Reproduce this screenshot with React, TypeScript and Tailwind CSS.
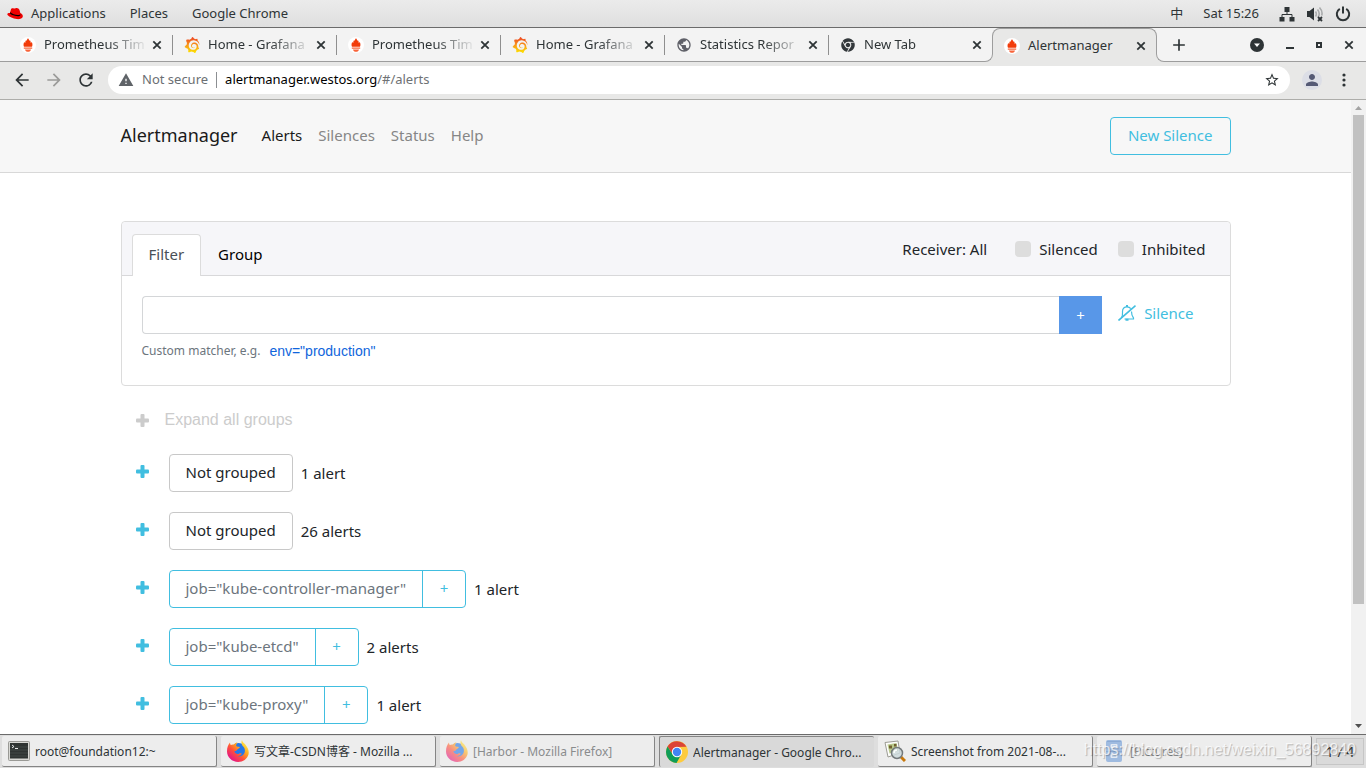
import React, { useState } from 'react';
import { MdArrowBack, MdArrowForward, MdRefresh, MdStarBorder, MdWarning, MdPerson, MdPublic, MdAdd } from 'react-icons/md';
import { FaChrome } from 'react-icons/fa';
import { SiGrafana } from 'react-icons/si';

type TabIcon = 'prometheus' | 'grafana' | 'globe' | 'chrome';

interface AlertGroup {
  label: string | null;
  count: string;
}

const tabs: { title: string; icon: TabIcon }[] = [
  { title: 'Prometheus Tim', icon: 'prometheus' },
  { title: 'Home - Grafana', icon: 'grafana' },
  { title: 'Prometheus Tim', icon: 'prometheus' },
  { title: 'Home - Grafana', icon: 'grafana' },
  { title: 'Statistics Repor', icon: 'globe' },
  { title: 'New Tab', icon: 'chrome' }
];

const groups: AlertGroup[] = [
  { label: null, count: '1 alert' },
  { label: null, count: '26 alerts' },
  { label: 'job="kube-controller-manager"', count: '1 alert' },
  { label: 'job="kube-etcd"', count: '2 alerts' },
  { label: 'job="kube-proxy"', count: '1 alert' }
];

function PrometheusIcon() {
  return (
    <svg className="size-4 shrink-0" viewBox="0 0 16 16">
      <circle cx="8" cy="8" r="8" fill="#fff" />
      <path
        fill="#f23c0a"
        d="M8 1c.3 1 1.200 1.700 1.300 2.900.4-.2.500-.6.500-1 .8 1 1 1.900.9 3 .5-.1.900-.5 1.100-.9.8 1.500.9 3.300.2 4.800H4c-.7-1.500-.6-3.300.2-4.800.2.4.6.8 1.100.9-.1-1.100.1-2 .9-3 0 .4.1.8.5 1C6.800 2.700 7.700 2 8 1z"
      />
      <path fill="#f8643a" d="M3.800 10.400h8.400v1.400H3.800zM5 12.400h6c-.3 1.400-1.500 2.400-3 2.400s-2.700-1-3-2.400z" />
    </svg>
  );
}

function GrafanaIcon() {
  return (
    <>
      <svg className="absolute size-0">
        <defs>
          <linearGradient id="grafana-fill" x1="0" y1="0" x2="0" y2="1">
            <stop offset="0.05" stopColor="#ee4a23" />
            <stop offset="0.45" stopColor="#f78f1e" />
            <stop offset="1" stopColor="#fde500" />
          </linearGradient>
        </defs>
      </svg>
      <SiGrafana className="size-4 shrink-0" fill="url(#grafana-fill)" />
    </>
  );
}

function FavIcon({ icon }: { icon: TabIcon }) {
  if (icon === 'prometheus') return <PrometheusIcon />;
  if (icon === 'grafana') return <GrafanaIcon />;
  if (icon === 'globe') return <MdPublic className="size-4 shrink-0 text-[#5f6068]" />;
  return <FaChrome className="size-4 shrink-0 p-px text-[#33383b]" />;
}

function CloseIcon() {
  return (
    <svg className="size-2.5" viewBox="0 0 10 10" stroke="#2e3436" strokeWidth="1.800">
      <path d="M1.300 1.300l7.400 7.400M8.700 1.300L1.300 8.700" />
    </svg>
  );
}

function RedHatIcon() {
  return (
    <svg className="h-3 w-4" viewBox="0 0 16 12">
      <path fill="#e00" d="M4 1.200C4.300.2 5.500 0 6.300.3c.8.300 1.500.2 2.300-.1C10.200-.3 12 .5 12.500 2l.8 3c1.400.7 2.700 1.800 2.500 3.400-.3 2.200-3.300 3-6 2.700C6 10.700 2.300 8.900.8 7.300c-1.200-1.500 0-2.500 2.100-2.400z" />
      <path d="M3.200 4.300c1.700 1.700 5.300 3 8 2.800 1.100-.1 2-.5 2-1.200l.2 1.300c-.7 1.100-2.600 1.200-4.300.9C6.500 7.700 3.700 6.500 2.900 5.300z" />
    </svg>
  );
}

function NetworkIcon() {
  return (
    <svg className="size-4" viewBox="0 0 16 16" fill="#2e3436">
      <path d="M5.500 1h5v5h-5zM.5 11h5v4.500h-5zM10.500 11h5v4.500h-5z" />
      <path fill="none" stroke="#2e3436" d="M8 6v2.500M3 11V8.500h10V11" />
    </svg>
  );
}

function VolumeIcon() {
  return (
    <svg className="size-4" viewBox="0 0 16 16" fill="none">
      <path fill="#2e3436" d="M0 5h2.500L7 1.500v13L2.500 11H0z" />
      <path stroke="#a9abac" strokeWidth="1.600" d="M8.500 5.500c1 1.500 1 3.500 0 5M10.500 3.500c2 2.500 2 5.500.5 7.500M12.500 1.500c2.300 2.500 3 5.500 2.200 8" />
      <path stroke="#2e3436" strokeWidth="1.800" d="M11 11l4 4M15 11l-4 4" />
    </svg>
  );
}

function PowerIcon() {
  return (
    <svg className="size-4" viewBox="0 0 16 16" fill="none" stroke="#2e3436" strokeWidth="2">
      <path d="M4.800 2.800a6.200 6.200 0 1 0 6.400 0M8 .500v7" />
    </svg>
  );
}

// Thick "+" used to expand a group
function PlusIcon() {
  return (
    <svg className="size-[13px]" viewBox="0 0 13 13" fill="currentColor">
      <rect x="4.500" y="0" width="4" height="13" rx="1" />
      <rect x="0" y="4.500" width="13" height="4" rx="1" />
    </svg>
  );
}

function BellSlashIcon() {
  return (
    <svg className="h-4 w-[18px]" viewBox="0 0 18 16" fill="none" stroke="currentColor" strokeWidth="1.200">
      <path d="M3.500 12.500C4.800 11 4.500 9 4.500 6.500 4.500 3.500 6.300 1.800 9 1.800c1.700 0 3 .7 3.800 1.800M13.500 6.500c0 3 .3 4.600 2 6.500v1H6.500" />
      <path strokeWidth="2" d="M9 0v2M7.500 14.800h3" />
      <path strokeWidth="1.600" d="M.5 15.500L17.500.700" />
    </svg>
  );
}

function TerminalIcon() {
  return (
    <svg className="size-[22px]" viewBox="0 0 22 22">
      <rect x=".5" y="1.500" width="21" height="19" rx="1" fill="#d8d8d4" stroke="#9a9a96" />
      <rect x="2" y="3" width="18" height="15.500" fill="#2f3432" />
      <path d="M2 7h18M2 10h18M2 13h18M2 16h18" stroke="#434946" />
      <path d="M4 5l2 1.500L4 8M7 8.500h3" stroke="#e8e8e8" fill="none" />
    </svg>
  );
}

function FirefoxIcon() {
  return (
    <svg className="size-[22px]" viewBox="0 0 22 22">
      <defs>
        <linearGradient id="fox" x1="0.9" y1="0.1" x2="0.2" y2="0.9">
          <stop offset="0" stopColor="#fff44f" />
          <stop offset="0.35" stopColor="#ffa91e" />
          <stop offset="0.65" stopColor="#ff4f3a" />
          <stop offset="1" stopColor="#e31587" />
        </linearGradient>
      </defs>
      <circle cx="11.500" cy="10.500" r="7.500" fill="#2477e8" />
      <path
        fill="url(#fox)"
        d="M15 0c.2 2 2 3 3.500 4.800C21 8 22.300 11 21.500 14.500 20.300 19 16 22 11.200 22 5 22 0 17.300 0 11.300 0 7.500 1.200 4.500 3 2.500c0 1 .3 1.900.8 2.500C5 4.300 6 4.300 7 4.600 8.200 3 9.500 2.500 10.500 2.300 9.500 3.500 9 4.600 9.300 6c.7 1 2.500.6 3.500 1-.2 1.500-2 1.800-2.800 2.800-.3 1.200-1.500 1.500-2.700 1.400C8 13.500 10 14.500 12 13.700c1.200-.5 2-.5 2.700.1-1 2-3 2.400-4.500 2.300 3.500 1.300 7.500-1 7.700-5 .1-2-.7-3.800-2.200-5C14.500 4.500 14 2 15 0z"
      />
    </svg>
  );
}

function ChromeIcon() {
  return (
    <svg className="size-[22px]" viewBox="0 0 22 22">
      <circle cx="11" cy="11" r="11" fill="#fdcb3f" />
      <path fill="#db4437" d="M1.500 5.500A11 11 0 0 1 20.500 5.800L11 6 6.700 13.500z" />
      <path fill="#0f9d58" d="M1.500 5.500L6.700 13.500 11 16l4.300-2.500L10.500 22A11 11 0 0 1 1.500 5.500z" />
      <circle cx="11" cy="11" r="5.200" fill="#fff" />
      <circle cx="11" cy="11" r="4.200" fill="#4285f4" />
    </svg>
  );
}

function ViewerIcon() {
  return (
    <svg className="size-[22px]" viewBox="0 0 22 22">
      <path d="M1 2.500L14 1l2 12-12 4z" fill="#fdfdfb" stroke="#9c9c94" />
      <path d="M3.500 4.500l9-1.500 1.500 8-8.500 2.500z" fill="#b9c98c" />
      <path d="M5 5.500h3v3H5zM10 4h2.500v2.500H10z" fill="#716030" />
      <path d="M17 17l4 4" stroke="#c8780c" strokeWidth="3" />
      <circle cx="13" cy="13" r="5.500" fill="#cdd9dc" fillOpacity=".85" stroke="#74797b" strokeWidth="1.500" />
      <path d="M10 13c0-2 1.500-3 3-3" stroke="#fff" strokeWidth="1.500" fill="none" />
    </svg>
  );
}

function DrawerIcon() {
  return (
    <svg className="size-[22px]" viewBox="0 0 22 22">
      <rect x="3" y="0" width="16" height="22" rx="2" fill="#6c9ad8" />
      <path d="M4 1.500h14M3 11.500h16" stroke="#4b7fc5" />
      <rect x="7.500" y="4" width="7" height="4" rx="1" fill="#dfe9f6" />
      <rect x="7.500" y="14" width="7" height="4" rx="1" fill="#dfe9f6" />
      <path d="M9 6h4M9 16h4" stroke="#6c9ad8" />
    </svg>
  );
}

const tasks = [
  { title: 'root@foundation12:~', icon: <TerminalIcon />, state: 'open' },
  { title: '写文章-CSDN博客 - Mozilla ...', icon: <FirefoxIcon />, state: 'open' },
  { title: '[Harbor - Mozilla Firefox]', icon: <FirefoxIcon />, state: 'minimized' },
  { title: 'Alertmanager - Google Chro...', icon: <ChromeIcon />, state: 'active' },
  { title: 'Screenshot from 2021-08-...', icon: <ViewerIcon />, state: 'open' },
  { title: '[Pictures]', icon: <DrawerIcon />, state: 'minimized' }
];

function TopPanel() {
  return (
    <header className="flex h-7 shrink-0 items-center border-b border-[#6b6b6b] bg-linear-to-b from-[#ebebeb] to-[#dfdfdf] pr-[15px] pl-[7px] text-[13px] text-[#2e3436]">
      <button className="flex items-center gap-2">
        <RedHatIcon />
        Applications
      </button>
      <button className="ml-6">Places</button>
      <button className="ml-6">Google Chrome</button>
      <div className="ml-auto flex items-center">
        <span>中</span>
        <span className="ml-5">Sat 15:26</span>
        <div className="ml-5 flex gap-3">
          <NetworkIcon />
          <VolumeIcon />
          <PowerIcon />
        </div>
      </div>
    </header>
  );
}

function TabStrip() {
  return (
    <div className="flex h-[34px] shrink-0 border-b border-[#9d9d9d] bg-[#f3f3f3] pl-2 text-[13px] text-[#2e3436]">
      {tabs.map((tab, i) => (
        <div key={i} className="flex w-[164px] items-center">
          <div className={`h-5 w-px ${i > 0 ? 'bg-[#8f8f8f]' : ''}`} />
          <div className="flex min-w-0 flex-1 items-center pr-2.5 pl-[11px]">
            <FavIcon icon={tab.icon} />
            <span className="ml-2 flex-1 overflow-hidden whitespace-nowrap [mask-image:linear-gradient(to_right,black_60%,transparent)]">
              {tab.title}
            </span>
            <button aria-label="Close tab" className="ml-1">
              <CloseIcon />
            </button>
          </div>
        </div>
      ))}
      <div className="relative -mb-px flex w-[165px] items-center rounded-t-lg border-x border-t border-[#9d9d9d] bg-[#e8e8e7] pr-2.5 pl-[11px]">
        <span className="absolute bottom-0 -left-2 size-2 bg-[#e8e8e7]">
          <span className="block size-full rounded-br-lg border-r border-b border-[#9d9d9d] bg-[#f3f3f3]" />
        </span>
        <span className="absolute -right-2 bottom-0 size-2 bg-[#e8e8e7]">
          <span className="block size-full rounded-bl-lg border-b border-l border-[#9d9d9d] bg-[#f3f3f3]" />
        </span>
        <PrometheusIcon />
        <span className="ml-2 flex-1">Alertmanager</span>
        <button aria-label="Close tab">
          <CloseIcon />
        </button>
      </div>
      <button aria-label="New tab" className="ml-3">
        <MdAdd className="size-5 text-[#2e3436]" />
      </button>
      <div className="ml-auto flex items-center gap-[22px] pr-3">
        <button aria-label="Search tabs">
          <svg className="size-3.5" viewBox="0 0 14 14">
            <circle cx="7" cy="7" r="7" fill="#2e3436" />
            <path d="M4 5.500h6L7 9z" fill="#fff" />
          </svg>
        </button>
        <button aria-label="Minimize">
          <svg className="size-2" viewBox="0 0 8 8"><path fill="#2e3436" d="M0 6h8v2H0z" /></svg>
        </button>
        <button aria-label="Maximize">
          <svg className="size-1.5" viewBox="0 0 6 6"><path fill="none" stroke="#2e3436" strokeWidth="2" d="M1 1h4v4H1z" /></svg>
        </button>
        <button aria-label="Close">
          <CloseIcon />
        </button>
      </div>
    </div>
  );
}

function Toolbar() {
  return (
    <div className="flex h-[38px] shrink-0 items-center border-b border-[#adadaa] bg-[#e8e8e7] pr-5 pb-px pl-3">
      <div className="flex items-center gap-3 text-[#2e3436]">
        <button aria-label="Back"><MdArrowBack className="size-5" /></button>
        <button aria-label="Forward"><MdArrowForward className="size-5 text-[#9b9b99]" /></button>
        <button aria-label="Reload"><MdRefresh className="size-5" /></button>
      </div>
      <div className="ml-3 flex h-7 flex-1 items-center rounded-full bg-white px-2.5 text-[13px]">
        <MdWarning className="size-4 text-[#5f6368]" />
        <span className="ml-2 text-[#6b6f73]">Not secure</span>
        <span className="mx-2 h-4 w-px bg-[#8c8f92]" />
        <span className="flex-1 text-[#6f7275]">
          <span className="text-black">alertmanager.westos.org</span>/#/alerts
        </span>
        <button aria-label="Bookmark"><MdStarBorder className="size-4 text-[#2e3436]" /></button>
      </div>
      <button aria-label="Profile" className="ml-3 flex size-5 items-center justify-center rounded-full bg-[#dcdee6]">
        <MdPerson className="size-[18px] text-[#555a75]" />
      </button>
      <button aria-label="Menu" className="ml-5">
        <svg className="h-3.5 w-1" viewBox="0 0 4 14" fill="#2e3436">
          <circle cx="2" cy="2" r="1.600" />
          <circle cx="2" cy="7" r="1.600" />
          <circle cx="2" cy="12" r="1.600" />
        </svg>
      </button>
    </div>
  );
}

function FilterCard() {
  const [activeTab, setActiveTab] = useState('filter');
  const [matcher, setMatcher] = useState('');

  return (
    <section className="mt-12 rounded border border-[#dcdcdc]">
      <div className="flex h-[54px] items-end rounded-t border-b border-[#d8d8da] bg-[#f6f6f9] pr-6 pl-2.5">
        {['filter', 'group'].map((key) => (
          <button
            key={key}
            onClick={() => setActiveTab(key)}
            className={`-mb-px h-[42px] rounded-t border border-b-0 px-4 pb-1 ${
              activeTab === key ? 'border-[#dcdcdc] bg-white text-[#495057]' : 'border-transparent text-black'
            }`}
          >
            {key === 'filter' ? 'Filter' : 'Group'}
          </button>
        ))}
        <div className="ml-auto flex h-full items-center gap-5">
          <span className="mr-2">Receiver: All</span>
          <label className="flex items-center gap-2">
            <input type="checkbox" className="size-4 appearance-none rounded bg-[#ddd]" />
            Silenced
          </label>
          <label className="flex items-center gap-2">
            <input type="checkbox" className="size-4 appearance-none rounded bg-[#ddd]" />
            Inhibited
          </label>
        </div>
      </div>

      <div className="px-5 pt-5 pb-6">
        <div className="flex">
          <input
            aria-label="Custom matcher"
            value={matcher}
            onChange={(e) => setMatcher(e.target.value)}
            className="h-[38px] min-w-0 flex-1 rounded-l border border-r-0 border-[#d4d6d8] px-3 outline-none"
          />
          <button className="h-[38px] w-[43px] bg-[#5897e8] text-white">+</button>
          <a href="#/silences/new" className="mx-4 flex h-[34px] items-center gap-2 text-[#41bee0]">
            <BellSlashIcon />
            Silence
          </a>
        </div>
        <div className="mt-[7px] flex items-center text-xs leading-5 text-[#6c757d]">
          Custom matcher, e.g.
          <button className="ml-[9px] font-['Liberation_Sans',sans-serif] text-sm text-[#1065dc]">env="production"</button>
        </div>
      </div>
    </section>
  );
}

function GroupRow({ group }: { group: AlertGroup }) {
  return (
    <div className="flex h-[38px] items-center">
      <button aria-label="Expand group" className="mr-5 pb-1 text-[#41bee0]">
        <PlusIcon />
      </button>
      {group.label === null ? (
        <button className="h-[38px] rounded border border-[#c8c8c8] px-4 pb-0.5">Not grouped</button>
      ) : (
        <div className="flex h-[38px] divide-x divide-[#41bee0] rounded border border-[#41bee0]">
          <span className="flex items-center px-4 pb-0.5 text-[#6c757d]">{group.label}</span>
          <button className="w-[42px] pb-0.5 text-[#41bee0]">+</button>
        </div>
      )}
      <span className="ml-2">{group.count}</span>
    </div>
  );
}

function Scrollbar() {
  return (
    <div className="flex w-[15px] shrink-0 flex-col items-center bg-[#f1f1f1]">
      <svg className="size-[15px] shrink-0" viewBox="0 0 15 15"><path fill="#a3a3a3" d="M4 10h7L7.500 6z" /></svg>
      <div className="w-full flex-1 px-0.5">
        <div className="h-[81%] bg-[#c1c1c1]" />
      </div>
      <svg className="size-[15px] shrink-0" viewBox="0 0 15 15"><path fill="#505050" d="M4 5h7L7.500 9z" /></svg>
    </div>
  );
}

function Taskbar() {
  return (
    <footer className="relative flex h-[34px] shrink-0 items-center gap-1 border-t border-[#6b6b6b] bg-[#dedede] px-0.5 text-xs text-[#2e3436]">
      {tasks.map((task) => (
        <button
          key={task.title}
          className={`flex h-[31px] min-w-0 flex-1 items-center gap-[5px] rounded-xs px-1.5 ${
            task.state === 'active'
              ? 'border-t border-l border-[#858585] bg-[#d9d9d9]'
              : 'border-r border-b border-[#858585] bg-[#ededed]'
          }`}
        >
          <span className={`shrink-0 ${task.state === 'minimized' ? 'opacity-60' : ''}`}>{task.icon}</span>
          <span className={`truncate pt-0.5 ${task.state === 'minimized' ? 'text-[#8a8c8d]' : ''}`}>{task.title}</span>
        </button>
      ))}
      <button className="h-[27px] w-12 border border-[#c6c6c6] bg-[#dadada] text-sm">1 / 4</button>
      <span className="absolute right-2.5 bottom-1.5 font-['Liberation_Sans',sans-serif] text-base leading-6 text-white/75 [text-shadow:1px_1px_1px_rgba(0,0,0,0.25)]">
        https://blog.csdn.net/weixin_56892840
      </span>
    </footer>
  );
}

export default function App() {
  return (
    <div className="flex h-screen flex-col overflow-hidden bg-white font-['Noto_Sans','Noto_Sans_CJK_SC',sans-serif]">
      <TopPanel />
      <TabStrip />
      <Toolbar />
      <div className="flex min-h-0 flex-1">
        <main className="min-w-0 flex-1 overflow-hidden text-[15px] leading-6 text-[#212529]">
          <nav className="border-b border-[#d8d8d8] bg-[#f7f7f7]">
            <div className="mx-auto flex h-[72px] max-w-[1110px] items-center">
              <a href="#/" className="mr-6 pb-0.5 text-lg text-[#1a1a1a]">Alertmanager</a>
              <div className="flex gap-4 pb-0.5 text-[#868686]">
                <a href="#/alerts" className="text-[#1a1a1a]">Alerts</a>
                <a href="#/silences">Silences</a>
                <a href="#/status">Status</a>
                <a href="#/help">Help</a>
              </div>
              <button className="ml-auto h-[38px] rounded border border-[#41bee0] px-[17px] pb-0.5 text-[#41bee0]">New Silence</button>
            </div>
          </nav>
          <div className="mx-auto max-w-[1110px]">
            <FilterCard />
            <div className="px-[15px]">
              <button className="mt-[22px] flex items-center gap-4 font-['Liberation_Sans',sans-serif] text-base text-[#ccc]">
                <PlusIcon />
                Expand all groups
              </button>
              <div className="mt-[22px] flex flex-col gap-5">
                {groups.map((group, i) => (
                  <GroupRow key={i} group={group} />
                ))}
              </div>
            </div>
          </div>
        </main>
        <Scrollbar />
      </div>
      <Taskbar />
    </div>
  );
}
